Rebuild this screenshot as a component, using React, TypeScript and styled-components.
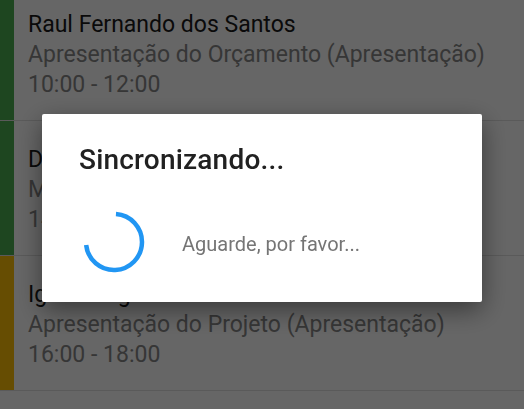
import React from 'react';
import styled, { createGlobalStyle } from 'styled-components';

const GlobalStyle = createGlobalStyle`
  html, body {
    margin: 0;
    padding: 0;
    background: #ffffff;
    font-family: Roboto, "Noto Sans", "Liberation Sans", sans-serif;
    overflow: hidden;
  }
`

interface Appointment {
  client: string;
  title: string;
  time: string;
  color: string;
}

const appointments: Appointment[] = [
  {
    client: 'Raul Fernando dos Santos',
    title: 'Apresentação do Orçamento (Apresentação)',
    time: '10:00 - 12:00',
    color: '#4caf50',
  },
  {
    client: 'Daniela Moreira Costa',
    title: 'Medição do Ambiente (Visita Técnica)',
    time: '14:00 - 16:00',
    color: '#4caf50',
  },
  {
    client: 'Igor Thiago Azevedo',
    title: 'Apresentação do Projeto (Apresentação)',
    time: '16:00 - 18:00',
    color: '#ffc107',
  },
]

const List = styled.div`
  display: flex;
  flex-direction: column;
  margin-top: -14px;
`

const Row = styled.div`
  display: flex;
  border-bottom: 1px solid #e0e0e0;
`

const ColorBar = styled.div<{ color: string }>`
  width: 14px;
  flex-shrink: 0;
  background: ${props => props.color};
`

const RowBody = styled.div`
  display: flex;
  flex-direction: column;
  padding: 24px 0 20px 14px;
  font-size: 23px;
  line-height: 30px;
`

const Client = styled.span`
  color: #1a1a1a;
`

const Detail = styled.span`
  color: #888888;
`

const Overlay = styled.div`
  position: fixed;
  inset: 0;
  background: rgba(0, 0, 0, 0.6);
  display: flex;
  justify-content: center;
  align-items: flex-start;
  padding-top: 114px;
`

const Dialog = styled.div`
  width: 440px;
  box-sizing: border-box;
  background: #ffffff;
  border-radius: 2px;
  box-shadow: 0 8px 26px rgba(0, 0, 0, 0.45);
  padding: 30px 36px 25px 37px;
  display: flex;
  flex-direction: column;
  gap: 31px;
`

const DialogTitle = styled.h2`
  margin: 0;
  font-size: 28px;
  line-height: 32px;
  font-weight: 500;
  letter-spacing: 0.2px;
  color: #212121;
`

const DialogContent = styled.div`
  display: flex;
  align-items: center;
  gap: 33px;
`

const Message = styled.span`
  font-size: 20px;
  color: #757575;
  margin-top: 3px;
`

const Spinner: React.FC = () => (
  <svg width="70" height="70" viewBox="0 0 70 70">
    <path
      d="M36.95 7.07 A28 28 0 1 1 7.15 37.93"
      fill="none"
      stroke="#2196f3"
      strokeWidth="4.5"
    />
  </svg>
)

export default function App() {
  return (
    <>
      <GlobalStyle />
      <List>
        {appointments.map(item => (
          <Row key={item.client}>
            <ColorBar color={item.color} />
            <RowBody>
              <Client>{item.client}</Client>
              <Detail>{item.title}</Detail>
              <Detail>{item.time}</Detail>
            </RowBody>
          </Row>
        ))}
      </List>
      <Overlay>
        <Dialog>
          <DialogTitle>Sincronizando...</DialogTitle>
          <DialogContent>
            <Spinner />
            <Message>Aguarde, por favor...</Message>
          </DialogContent>
        </Dialog>
      </Overlay>
    </>
  )
}
